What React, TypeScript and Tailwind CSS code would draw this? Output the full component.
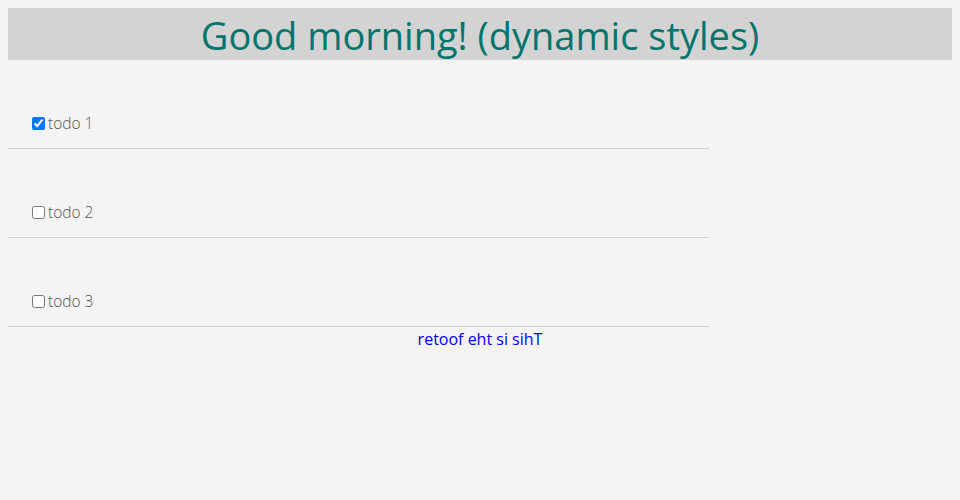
import { useState } from "react";

const initialTodos = [
  { id: 1, text: "todo 1", done: true },
  { id: 2, text: "todo 2", done: false },
  { id: 3, text: "todo 3", done: false },
];

export default function App() {
  const [todos, setTodos] = useState(initialTodos);

  const toggle = (id: number) => {
    setTodos(todos.map((t) => (t.id === id ? { ...t, done: !t.done } : t)));
  };

  return (
    <div className="min-h-screen bg-[#f4f4f4] p-2 font-['Open_Sans',sans-serif]">
      <h1 className="bg-[#d3d3d3] pt-[2px] text-center text-[38px] leading-[50px] text-[#00756b]">
        Good morning! (dynamic styles)
      </h1>
      <ul className="w-[701px]">
        {todos.map((todo) => (
          <li
            key={todo.id}
            className="flex h-[89px] items-end border-b border-[#cccccc] pb-[13px] pl-6"
          >
            <label className="flex items-center font-['Open_Sans_Light','Open_Sans',sans-serif] text-[15.5px] leading-6 font-light text-[#555555]">
              <input
                type="checkbox"
                checked={todo.done}
                onChange={() => toggle(todo.id)}
                className="mr-[3px] h-[13px] w-[13px]"
              />
              {todo.text}
            </label>
          </li>
        ))}
      </ul>
      <footer className="text-center text-base leading-6 text-[#0000ee]">
        retoof eht si sihT
      </footer>
    </div>
  );
}
